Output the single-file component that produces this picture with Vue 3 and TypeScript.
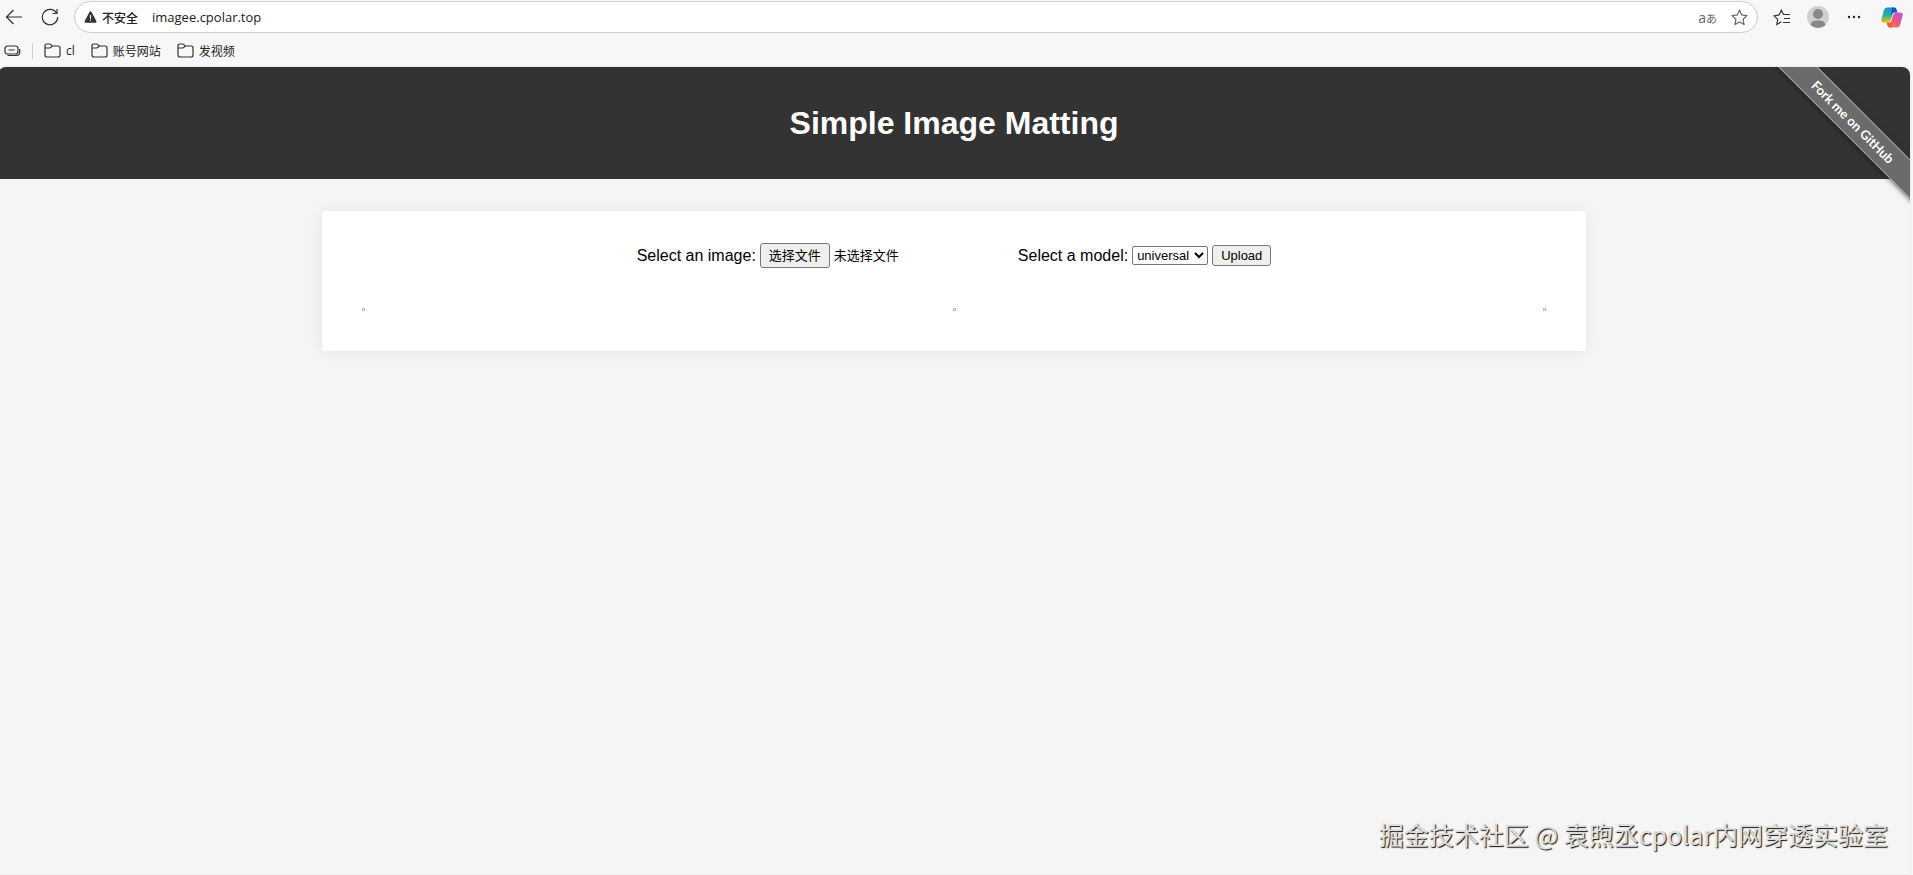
<script setup lang="ts">
import { ref } from 'vue'

const address = ref('imagee.cpolar.top')
const folders: string[] = ['cl', '账号网站', '发视频']
const models: string[] = ['universal', 'people']
const model = ref('universal')
const fileName = ref('未选择文件')
const previews: string[] = ['original', 'mask', 'result']

function pickFile(event: Event): void {
  const input = event.target as HTMLInputElement
  fileName.value = input.files?.[0]?.name ?? '未选择文件'
}
</script>

<template>
  <div class="browser">
    <div class="toolbar">
      <button class="icon-button back" type="button" aria-label="Back">
        <svg width="18" height="18" viewBox="0 0 18 18"><path d="M17 9H1.5M8.500 2 1.500 9l7 7" /></svg>
      </button>
      <button class="icon-button reload" type="button" aria-label="Reload">
        <svg width="18" height="18" viewBox="0 0 18 18"><path d="M15.500 5A7.700 7.700 0 1 0 16.700 9M16 1v4.500h-4.500" /></svg>
      </button>
      <div class="address">
        <svg class="warning" width="13" height="12" viewBox="0 0 13 12">
          <path d="M5.600.8a1 1 0 0 1 1.800 0l5 9.400a1 1 0 0 1-.9 1.500h-10a1 1 0 0 1-.9-1.500z" fill="#333" />
          <path d="M6.500 4v3.700M6.500 8.800V10" stroke="#fff" stroke-width="1.2" />
        </svg>
        <span class="insecure">不安全</span>
        <input v-model="address" class="url" type="text" aria-label="Address" />
        <button class="icon-button translate" type="button" aria-label="Translate">
          <span class="latin">a</span><span class="kana">あ</span>
        </button>
        <button class="icon-button star" type="button" aria-label="Favorite">
          <svg width="17" height="17" viewBox="0 0 17 17"><path d="m8.500 1.200 2.200 4.700 5.100.7-3.700 3.600.9 5.200-4.500-2.500L4 15.400l.9-5.200-3.700-3.600 5.100-.7z" /></svg>
        </button>
      </div>
      <button class="icon-button favorites" type="button" aria-label="Favorites">
        <svg width="18" height="17" viewBox="0 0 18 17"><path d="M8.300 12.800 3.800 15.500l.9-5.100L1.200 6.800l4.900-.9L8.300 1.200l2.200 4.300H17M11 9.500h6M10 13.500h7" /></svg>
      </button>
      <button class="icon-button profile" type="button" aria-label="Profile">
        <svg width="22" height="22" viewBox="0 0 22 22">
          <circle cx="11" cy="11" r="11" fill="#d2d0ce" />
          <circle cx="11" cy="8" r="5" fill="#8a8886" />
          <path d="M3.500 19c1-4 4-4.500 7.500-4.500s6.500.5 7.500 4.500A11 11 0 0 1 3.500 19z" fill="#8a8886" />
        </svg>
      </button>
      <button class="icon-button more" type="button" aria-label="More">
        <svg width="14" height="4" viewBox="0 0 14 4"><g fill="#222"><circle cx="2" cy="2" r="1.200" /><circle cx="7" cy="2" r="1.200" /><circle cx="12" cy="2" r="1.200" /></g></svg>
      </button>
      <button class="icon-button copilot" type="button" aria-label="Copilot">
        <svg width="22" height="21" viewBox="0 0 22 21">
          <defs>
            <linearGradient id="cool" x1="0" y1="0" x2="0" y2="1">
              <stop offset="0" stop-color="#1a8fe8" /><stop offset=".5" stop-color="#24b29a" /><stop offset="1" stop-color="#f0c01c" />
            </linearGradient>
            <linearGradient id="warm" x1="1" y1="0" x2="0" y2="1">
              <stop offset="0" stop-color="#a75bf0" /><stop offset=".55" stop-color="#f0508a" /><stop offset="1" stop-color="#ff8a3c" />
            </linearGradient>
          </defs>
          <path d="M6 .5h7.500l-3.500 12Q9 15.500 6.500 15.500H3Q-.5 15.500.4 12L3 3Q3.700.5 6 .5z" fill="url(#cool)" />
          <path d="M11 .5h2.500Q15 .5 15.600 2.500l.8 3h-3Q11.500 5.500 11 7.500L10 9z" fill="#1b4fd0" />
          <path d="M16 20.500H8.500l3.500-12Q13 5.500 15.500 5.500H19Q22.500 5.500 21.600 9L19 18Q18.300 20.500 16 20.500z" fill="url(#warm)" />
          <path d="M11 20.500H8.500Q7 20.500 6.400 18.500l-.8-3h3Q10.500 15.500 11 13.500l1-1.500z" fill="#f0603c" />
        </svg>
      </button>
    </div>

    <nav class="bookmarks" aria-label="Bookmarks">
      <button class="icon-button workspace" type="button" aria-label="Workspaces">
        <svg width="17" height="12" viewBox="0 0 17 12">
          <rect x="1" y="1" width="13" height="8" rx="2.500" />
          <path d="M4.500 5h6M3.500 10.500h9a3.300 3.300 0 0 0 3.200-3.300V4" />
        </svg>
      </button>
      <span class="divider"></span>
      <a v-for="folder in folders" :key="folder" class="folder" href="#">
        <svg width="17" height="15" viewBox="0 0 17 15"><path d="M1 4V3q0-2 2-2h2.600q.8 0 1.300.6L8.300 3H14q2 0 2 2v7q0 2-2 2H3q-2 0-2-2zm0 1h4.600q.8 0 1.300-.6L8.300 3" /></svg>
        {{ folder }}
      </a>
    </nav>

    <div class="page">
      <header class="banner">
        <h1>Simple Image Matting</h1>
      </header>
      <div class="ribbon-clip">
        <a class="ribbon" href="#">Fork me on GitHub</a>
      </div>

      <main class="card">
        <form class="upload-form" @submit.prevent>
          <label for="image">Select an image:</label>
          <div class="file">
            <span class="file-button">选择文件</span>
            <span class="file-name">{{ fileName }}</span>
            <input id="image" class="file-input" type="file" accept="image/*" @change="pickFile" />
          </div>
          <label for="model">Select a model:</label>
          <select id="model" v-model="model">
            <option v-for="name in models" :key="name" :value="name">{{ name }}</option>
          </select>
          <button class="upload" type="submit">Upload</button>
        </form>
        <div class="previews">
          <div v-for="preview in previews" :key="preview" class="preview"></div>
        </div>
      </main>

      <p class="watermark">掘金技术社区 @ 袁煦丞cpolar内网穿透实验室</p>
    </div>
  </div>
</template>

<style>
body {
  margin: 0;
  overflow: hidden;
}
</style>

<style scoped>
.browser {
  display: flex;
  flex-direction: column;
  box-sizing: border-box;
  height: 100vh;
  background: #f7f7f7;
  font-family: "Open Sans", "Noto Sans CJK SC", sans-serif;
  color: #222;
}

.toolbar {
  display: flex;
  align-items: center;
  height: 34px;
  padding: 0 10px 0 5px;
}

.icon-button {
  display: flex;
  align-items: center;
  justify-content: center;
  flex: none;
  padding: 0;
  border: 0;
  background: none;
  color: inherit;
}

.icon-button svg,
.folder svg {
  fill: none;
  stroke: #333;
  stroke-width: 1.2;
}

.profile svg,
.more svg,
.copilot svg {
  stroke: none;
}

.reload {
  margin-left: 18px;
}

.address {
  display: flex;
  align-items: center;
  flex: 1;
  box-sizing: border-box;
  height: 32px;
  margin: 0 15px;
  padding: 0 9px;
  border: 1px solid #ccc;
  border-radius: 16px;
  background: #fff;
}

.insecure {
  margin-left: 5px;
  font: 500 12px "Noto Sans CJK SC", sans-serif;
}

.url {
  flex: 1;
  min-width: 0;
  margin-left: 14px;
  padding: 0;
  border: 0;
  outline: 0;
  background: none;
  font: 13px "Open Sans", sans-serif;
  color: #222;
}

.translate {
  align-items: baseline;
  color: #666;
}

.latin {
  font: 14px "Open Sans", sans-serif;
}

.kana {
  font: 11px "Noto Sans CJK JP", sans-serif;
}

.star {
  margin-left: 14px;
}

.star svg {
  stroke: #666;
}

.profile {
  margin-left: 16px;
}

.more {
  margin-left: 18px;
}

.copilot {
  margin-left: 20px;
}

.bookmarks {
  display: flex;
  align-items: center;
  height: 33px;
  padding-left: 4px;
}

.divider {
  width: 1px;
  height: 16px;
  margin: 0 11px;
  background: #ccc;
}

.folder {
  display: flex;
  align-items: center;
  gap: 5px;
  margin-right: 16px;
  font: 12px "Open Sans", "Noto Sans CJK SC", sans-serif;
  color: #222;
  text-decoration: none;
}

.page {
  position: relative;
  flex: 1;
  margin: 0 3px 1px -2px;
  border-radius: 8px 8px 0 0;
  background: #f5f5f5;
  box-shadow: 0 0 2px #ccc;
  font: 16px/18px "Liberation Sans", Arial, sans-serif;
  color: #000;
}

.banner {
  padding: 37px 32px;
  border-radius: 8px 8px 0 0;
  background: #333;
  color: #fff;
  text-align: center;
}

h1 {
  margin: 0;
  font-size: 32px;
  line-height: 38px;
}

.ribbon-clip {
  position: absolute;
  top: 0;
  right: 0;
  width: 150px;
  height: 150px;
  overflow: hidden;
  border-radius: 0 8px 0 0;
}

.ribbon {
  position: absolute;
  top: 41px;
  right: -43px;
  box-sizing: border-box;
  width: 200px;
  border: 1px solid #aaa;
  background: #6b6b6b;
  box-shadow: 0 1px 5px rgba(0, 0, 0, 0.5);
  font: 700 13px/26px Lato, sans-serif;
  color: #fff;
  text-align: center;
  text-decoration: none;
  transform: rotate(45deg);
}

.card {
  box-sizing: border-box;
  max-width: 1264px;
  margin: 32px auto 0;
  padding: 32px 40px 40px;
  border-radius: 2px;
  background: #fff;
  box-shadow: 0 0 16px rgba(0, 0, 0, 0.07);
}

.upload-form {
  display: flex;
  align-items: center;
  justify-content: center;
  gap: 4px;
}

.file {
  position: relative;
  display: flex;
  align-items: center;
  gap: 4px;
  width: 254px;
  font: 13px/23px "Liberation Sans", "Noto Sans CJK SC", sans-serif;
}

.file-button {
  padding: 0 8px;
  border: 1px solid #767676;
  border-radius: 3px;
  background: #efefef;
}

.file-input {
  position: absolute;
  inset: 0;
  width: 100%;
  opacity: 0;
}

select {
  box-sizing: border-box;
  width: 76px;
  height: 19px;
  padding: 0;
  border: 1px solid #767676;
  border-radius: 2px;
  background: #fff;
  font: 13px "Liberation Sans", Arial, sans-serif;
  color: #000;
}

.upload {
  box-sizing: border-box;
  height: 21px;
  padding: 0 8px;
  border: 1px solid #767676;
  border-radius: 3px;
  background: #efefef;
  font: 13px "Liberation Sans", Arial, sans-serif;
  color: #000;
}

.previews {
  display: flex;
  justify-content: space-between;
  margin-top: 40px;
}

.preview {
  width: 1px;
  height: 1px;
  border: 1px solid #bbb;
}

.watermark {
  position: absolute;
  right: 22px;
  bottom: 22px;
  margin: 0;
  font: 25px/36px "Noto Sans CJK SC", sans-serif;
  color: #ddd;
  text-shadow: 1px 1px 1px #111;
  white-space: nowrap;
}
</style>
